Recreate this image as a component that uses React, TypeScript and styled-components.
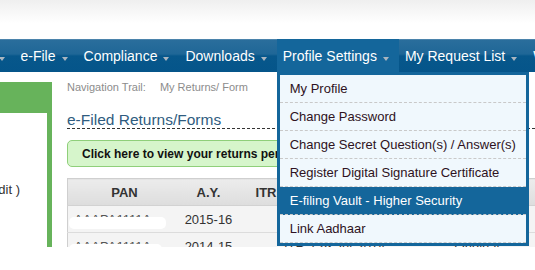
import React from "react";
import styled, { createGlobalStyle } from "styled-components";

const GlobalStyle = createGlobalStyle`
  html, body {
    margin: 0;
    padding: 0;
    background: #fff;
  }
  body {
    font-family: "Liberation Sans", Arial, sans-serif;
  }
`;

const navItems = [
    { name: "Dashboard" },
    { name: "e-File" },
    { name: "Compliance" },
    { name: "Downloads" },
    { name: "Profile Settings", active: true },
    { name: "My Request List" },
    { name: "Worklist" },
];

const profileMenu = [
    "My Profile",
    "Change Password",
    "Change Secret Question(s) / Answer(s)",
    "Register Digital Signature Certificate",
    "E-filing Vault - Higher Security",
    "Link Aadhaar",
];

const returns = [
    { pan: "AAAPA1111A", ay: "2015-16", itr: "ITR-1", date: "14-Jul-2016", type: "Original", blob: [1, 97] },
    { pan: "AAAPA1111A", ay: "2014-15", itr: "ITR-1", date: "29-Jul-2014", type: "Original", blob: [1, 93] },
];

const Page = styled.div`
    width: 535px;
    height: 270px;
    overflow: hidden;
    background: #fff;
`;

const TopStrip = styled.div`
    height: 39px;
    background: linear-gradient(to bottom, #efefef 0%, #ffffff 60%);
`;

const NavBar = styled.nav`
    height: 33px;
    position: relative;
    z-index: 5;
    background: linear-gradient(
        to bottom,
        #6c99bb 0px,
        #2a6e9c 1px,
        #1f6797 15px,
        #07578b 17px,
        #05558a 100%
    );
`;

const NavList = styled.ul`
    display: flex;
    margin: 0 0 0 -82px;
    padding: 0;
    list-style: none;
    white-space: nowrap;
`;

const NavItem = styled.li<{ $active?: boolean }>`
    position: relative;
    display: flex;
    align-items: center;
    height: 33px;
    padding: 0 10px 0 6px;
    color: #fff;
    font-size: 14px;
    background: ${(p) => (p.$active ? "#14669b" : "transparent")};
`;

const Caret = styled.span`
    display: inline-block;
    width: 0;
    height: 0;
    margin: 6px 0 0 6px;
    border-left: 3.5px solid transparent;
    border-right: 3.5px solid transparent;
    border-top: 4px solid #a9b5bf;
`;

const DropMenu = styled.ul`
    position: absolute;
    top: 100%;
    left: 0;
    width: 252px;
    box-sizing: border-box;
    margin: 0;
    padding: 0;
    list-style: none;
    border: 3px solid #14669b;
    background: #f0f8fd;
`;

const DropItem = styled.li<{ $hl?: boolean }>`
    display: flex;
    align-items: center;
    height: 28px;
    box-sizing: border-box;
    padding-left: 10px;
    border-bottom: 1px dashed #c9c9c9;
    font-size: 13px;
    color: ${(p) => (p.$hl ? "#fff" : "#2e1222")};
    background: ${(p) => (p.$hl ? "#14669b" : "transparent")};
`;

const Main = styled.div`
    display: flex;
    height: 175px;
    overflow: hidden;
`;

const Sidebar = styled.aside`
    width: 52px;
    flex-shrink: 0;
    margin-top: 10px;
    box-sizing: border-box;
    padding: 31px 5px 0 0;
    display: flex;
    flex-direction: column;
    background: #67b35b;
`;

const SidebarBody = styled.div`
    flex: 1;
    display: flex;
    justify-content: flex-end;
    padding: 69px 27px 0 0;
    overflow: hidden;
    background: #fff;
`;

const SideText = styled.span`
    font-size: 13px;
    color: #333;
    white-space: nowrap;
`;

const Content = styled.section`
    flex: 1;
    min-width: 0;
    margin-left: 15px;
    padding-top: 8px;
`;

const Trail = styled.div`
    font-size: 11px;
    line-height: 14px;
    color: #8c8c8c;
    white-space: nowrap;
`;

const TrailValue = styled.span`
    margin-left: 14px;
`;

const Heading = styled.h2`
    margin: 17px 0 0;
    font-size: 15.5px;
    font-weight: normal;
    line-height: 17px;
    color: #2f5c80;
    border-bottom: 1px dashed #333;
    white-space: nowrap;
`;

const GreenButton = styled.div`
    display: flex;
    align-items: center;
    width: 433px;
    height: 27px;
    box-sizing: border-box;
    margin-top: 11px;
    padding-left: 14px;
    border: 1px solid #8fcf7a;
    border-radius: 5px;
    background: #d6f5cb;
    font-size: 12px;
    font-weight: bold;
    color: #111;
    white-space: nowrap;
`;

const Table = styled.table`
    margin-top: 11px;
    width: 480px;
    border-collapse: collapse;
    table-layout: fixed;
    border-left: 1px solid #cfcfcf;
    border-top: 1px solid #cfcfcf;
`;

const Th = styled.th<{ $w: number }>`
    width: ${(p) => p.$w}px;
    height: 26px;
    padding: 0;
    font-size: 13px;
    font-weight: bold;
    color: #333;
    text-align: center;
    background: linear-gradient(to bottom, #ececec, #dddddd);
    border-bottom: 1px solid #d2d2d2;
`;

const Td = styled.td<{ $indent?: number }>`
    height: 26px;
    padding: 0 0 0 ${(p) => p.$indent ?? 0}px;
    font-size: 13px;
    color: #333;
    text-align: ${(p) => (p.$indent ? "left" : "center")};
    background: #f4f4f4;
    border-bottom: 1px solid #dcdcdc;
    white-space: nowrap;
`;

const PanCell = styled(Td)`
    position: relative;
    text-align: left;
    padding-left: 6px;
    color: #555;
`;

const Redact = styled.span`
    position: absolute;
    top: 11px;
    height: 12px;
    border-radius: 5px;
    background: #fff;
    filter: blur(0.6px);
`;

export default function App() {
    return (
        <Page>
            <GlobalStyle />
            <TopStrip />
            <NavBar>
                <NavList>
                    {navItems.map((item) => (
                        <NavItem key={item.name} $active={item.active}>
                            {item.name}
                            <Caret />
                            {item.active && (
                                <DropMenu>
                                    {profileMenu.map((m) => (
                                        <DropItem key={m} $hl={m.startsWith("E-filing")}>
                                            {m}
                                        </DropItem>
                                    ))}
                                </DropMenu>
                            )}
                        </NavItem>
                    ))}
                </NavList>
            </NavBar>
            <Main>
                <Sidebar>
                    <SidebarBody>
                        <SideText>View Form 26AS (Tax Credit )</SideText>
                    </SidebarBody>
                </Sidebar>
                <Content>
                    <Trail>
                        Navigation Trail:<TrailValue>My Returns/ Form</TrailValue>
                    </Trail>
                    <Heading>e-Filed Returns/Forms</Heading>
                    <GreenButton>
                        Click here to view your returns pending for e-Verification
                    </GreenButton>
                    <Table>
                        <thead>
                            <tr>
                                <Th $w={113}>PAN</Th>
                                <Th $w={55}>A.Y.</Th>
                                <Th $w={60}>ITR</Th>
                                <Th $w={110}>Filing Date</Th>
                                <Th $w={142}>Filing Type</Th>
                            </tr>
                        </thead>
                        <tbody>
                            {returns.map((r) => (
                                <tr key={r.ay}>
                                    <PanCell>
                                        {r.pan}
                                        <Redact style={{ left: r.blob[0], width: r.blob[1] }} />
                                    </PanCell>
                                    <Td>{r.ay}</Td>
                                    <Td $indent={48}>{r.itr}</Td>
                                    <Td>{r.date}</Td>
                                    <Td>{r.type}</Td>
                                </tr>
                            ))}
                        </tbody>
                    </Table>
                </Content>
            </Main>
        </Page>
    );
}
